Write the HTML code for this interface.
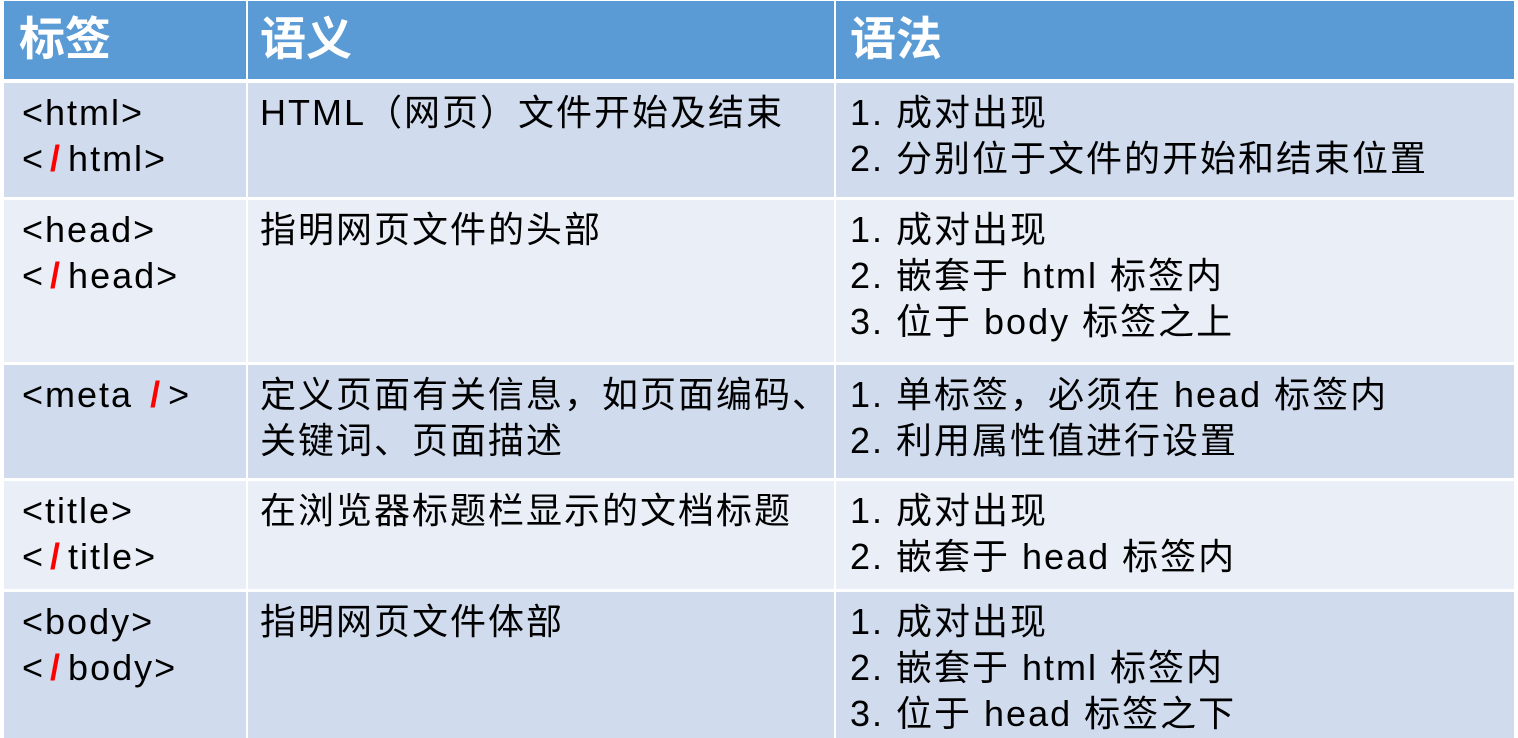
<!DOCTYPE html>
<html><head><meta charset="utf-8"><style>
body{margin:0;width:1518px;height:738px;background:#fff;overflow:hidden;position:relative;font-family:"Liberation Sans","Noto Sans CJK SC",sans-serif;}
.c{position:absolute;box-sizing:border-box;padding-top:7px;font-size:36px;letter-spacing:2px;line-height:46px;color:#000;white-space:nowrap;}
.h{background:#5B9BD5;color:#fff;font-weight:bold;font-size:46px;padding-top:7px;line-height:56px;font-family:"Noto Sans CJK SC",sans-serif;letter-spacing:0}
.d{background:#D0DCEE}.l{background:#E9EEF7}
.c1{left:4px;width:242px;padding-left:18px}
.h.c1{padding-left:15px}
.c2{left:248px;width:586px;padding-left:12px}
.c3{left:836px;width:678px;padding-left:14px}
.r{color:#f00;font-weight:bold;padding:0 6px 0 5px}
</style></head><body>
<div class="c h c1" style="top:1px;height:78px">标签</div>
<div class="c h c2" style="top:1px;height:78px">语义</div>
<div class="c h c3" style="top:1px;height:78px">语法</div>

<div class="c d c1" style="top:83px;height:114px">&lt;html&gt;<br>&lt;<span class="r">/</span>html&gt;</div>
<div class="c d c2" style="top:83px;height:114px">HTML（网页）文件开始及结束</div>
<div class="c d c3" style="top:83px;height:114px">1. 成对出现<br>2. 分别位于文件的开始和结束位置</div>

<div class="c l c1" style="top:200px;height:162px">&lt;head&gt;<br>&lt;<span class="r">/</span>head&gt;</div>
<div class="c l c2" style="top:200px;height:162px">指明网页文件的头部</div>
<div class="c l c3" style="top:200px;height:162px">1. 成对出现<br>2. 嵌套于 html 标签内<br>3. 位于 body 标签之上</div>

<div class="c d c1" style="top:365px;height:113px">&lt;meta <span class="r">/</span>&gt;</div>
<div class="c d c2" style="top:365px;height:113px">定义页面有关信息，如页面编码、<br>关键词、页面描述</div>
<div class="c d c3" style="top:365px;height:113px">1. 单标签，必须在 head 标签内<br>2. 利用属性值进行设置</div>

<div class="c l c1" style="top:481px;height:108px">&lt;title&gt;<br>&lt;<span class="r">/</span>title&gt;</div>
<div class="c l c2" style="top:481px;height:108px">在浏览器标题栏显示的文档标题</div>
<div class="c l c3" style="top:481px;height:108px">1. 成对出现<br>2. 嵌套于 head 标签内</div>

<div class="c d c1" style="top:592px;height:146px">&lt;body&gt;<br>&lt;<span class="r">/</span>body&gt;</div>
<div class="c d c2" style="top:592px;height:146px">指明网页文件体部</div>
<div class="c d c3" style="top:592px;height:146px">1. 成对出现<br>2. 嵌套于 html 标签内<br>3. 位于 head 标签之下</div>
</body></html>
